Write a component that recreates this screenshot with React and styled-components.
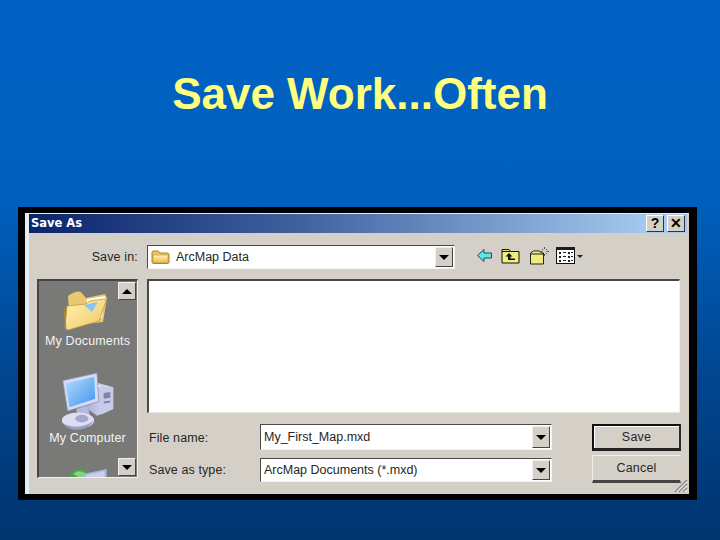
import React from "react";
import styled, { createGlobalStyle } from "styled-components";

const Global = createGlobalStyle`
  html, body { margin: 0; padding: 0; height: 540px; overflow: hidden; }
  body { background: #0060c0; }
`;

const Slide = styled.div`
  width: 720px;
  height: 540px;
  overflow: hidden;
  background: linear-gradient(180deg, #0062c4 0%, #0060bf 36%, #00468f 70%, #00346f 100%);
`;

const Title = styled.h1`
  margin: 0;
  height: 207px;
  padding-top: 69px;
  box-sizing: border-box;
  text-align: center;
  font: bold 44px/50px "Liberation Sans", Arial, sans-serif;
  color: #ffff80;
`;

const Frame = styled.div`
  position: relative;
  margin-left: 18px;
  width: 679px;
  height: 293px;
  box-sizing: border-box;
  border: solid #000;
  border-width: 6px 8px 6px 7px;
  background: #d4d0c8;
  font: 12.5px/16px "Liberation Sans", Arial, sans-serif;
  color: #262626;
`;

const Inner = styled.div`
  height: 100%;
  box-sizing: border-box;
  border-top: 1px solid #e8e6e0;
  border-left: 4px solid #e4eef4;
  padding-right: 2px;
`;

const TitleBar = styled.div`
  height: 19px;
  display: flex;
  align-items: center;
  justify-content: space-between;
  padding: 0 2px;
  background: linear-gradient(90deg, #0a246a 0%, #3f5f9d 40%, #a6caf0 95%);
`;

const Caption = styled.span`
  font: bold 11.5px/19px "DejaVu Sans", Verdana, sans-serif;
  color: #fff;
`;

const WinButtons = styled.div`
  display: flex;
  gap: 3px;
`;

const WinButton = styled.div`
  width: 18px;
  height: 17px;
  box-sizing: border-box;
  background: #d4d0c8;
  border: 1px solid;
  border-color: #fff #333 #333 #fff;
  font: bold 14px/15px "Liberation Sans", Arial, sans-serif;
  text-align: center;
  color: #000;
`;

const Content = styled.div`
  padding: 12px 6px 0 8px;
`;

const Toolbar = styled.div`
  display: flex;
  align-items: center;
  height: 24px;
  margin-bottom: 10px;
`;

const SaveInLabel = styled.label`
  width: 101px;
  margin-right: 9px;
  text-align: right;
  letter-spacing: 0.15px;
`;

const Combo = styled.div`
  display: flex;
  align-items: center;
  box-sizing: border-box;
  width: ${(p) => p.$w}px;
  height: ${(p) => p.$h}px;
  background: #fff;
  border: 1px solid;
  border-color: #4a4a48 #f4f3ef #f4f3ef #4a4a48;
  padding-right: 1px;
  padding-left: 3px;
`;

const ComboText = styled.span`
  flex: 1;
  white-space: nowrap;
`;

const Arrow = styled.div`
  flex: none;
  width: 18px;
  height: ${(p) => p.$h}px;
  box-sizing: border-box;
  display: flex;
  align-items: center;
  justify-content: center;
  background: #d4d0c8;
  border: 1px solid;
  border-color: #f0efeb #444 #444 #f0efeb;
`;

const Tri = styled.div`
  width: 0;
  height: 0;
  border-left: 5px solid transparent;
  border-right: 5px solid transparent;
  ${(p) => (p.$up ? "border-bottom: 5px solid #000;" : "border-top: 5px solid #000;")}
`;

const Tools = styled.div`
  display: flex;
  align-items: center;
  margin-left: 22px;
  margin-top: -3px;
  gap: 9px;
`;

const Main = styled.div`
  display: grid;
  grid-template-columns: 101px 534px;
  column-gap: 9px;
`;

const Places = styled.div`
  position: relative;
  height: 199px;
  box-sizing: border-box;
  overflow: hidden;
  background: #797977;
  border: 1px solid;
  border-width: 2px 1px 1px 2px;
  border-color: #454545 #f2f1ec #f2f1ec #454545;
`;

const Place = styled.div`
  display: flex;
  flex-direction: column;
  align-items: center;
  width: 97px;
  height: ${(p) => p.$h}px;
  padding-top: ${(p) => p.$pt}px;
  box-sizing: border-box;
  color: #f4f4f4;
  letter-spacing: 0.15px;
  white-space: nowrap;
`;

const ScrollBtn = styled.div`
  position: absolute;
  left: 79px;
  ${(p) => (p.$up ? "top: 1px;" : "bottom: 1px;")}
  width: 18px;
  height: 18px;
  box-sizing: border-box;
  display: flex;
  align-items: center;
  justify-content: center;
  background: #d4d0c8;
  border: 1px solid;
  border-color: #f0efeb #444 #444 #f0efeb;
`;

const Right = styled.div`
  display: flex;
  flex-direction: column;
`;

const FileList = styled.div`
  height: 134px;
  width: 533px;
  box-sizing: border-box;
  background: #fff;
  border: 1px solid;
  border-width: 2px 1px 1px 2px;
  border-color: #484848 #f2f1ec #e8e7e1 #484848;
`;

const Form = styled.div`
  display: flex;
  margin-top: 11px;
`;

const Fields = styled.div`
  display: flex;
  flex-direction: column;
  gap: 8px;
  width: 445px;
`;

const Field = styled.div`
  display: flex;
  align-items: center;
  height: ${(p) => p.$h}px;
`;

const FieldLabel = styled.label`
  width: 111px;
  padding-left: 2px;
  padding-top: ${(p) => p.$pt || 0}px;
  letter-spacing: 0.1px;
`;

const Buttons = styled.div`
  display: flex;
  flex-direction: column;
  gap: 4px;
`;

const Btn = styled.button`
  width: 89px;
  height: ${(p) => p.$h}px;
  margin: 0;
  padding: 0 0 1px;
  background: #d4d0c8;
  font: 12.5px/16px "Liberation Sans", Arial, sans-serif;
  letter-spacing: 0.2px;
  color: #262626;
  border-style: solid;
  border-width: ${(p) => (p.$def ? "2px 2px 3px 2px" : "1px 1px 3px 1px")};
  border-color: ${(p) => (p.$def ? "#111 #2a2a2a #222 #111" : "#f0efeb #d4d0c8 #444 #f0efeb")};
  box-shadow: ${(p) => (p.$def ? "inset 1px 1px 0 #fff" : "none")};
`;

const Grip = styled.svg`
  position: absolute;
  right: 1px;
  bottom: 1px;
`;

const FolderSmall = () => (
  <svg width="19" height="16" viewBox="0 0 19 16" style={{ marginRight: 6, flex: "none" }}>
    <defs>
      <linearGradient id="fs" x1="0" y1="0" x2="0" y2="1">
        <stop offset="0" stopColor="#fff4b8" />
        <stop offset="1" stopColor="#e8b84e" />
      </linearGradient>
    </defs>
    <path d="M1 3.5Q1 2 2.5 2H7L9 4H16.5Q18 4 18 5.5V13Q18 14.5 16.5 14.5H3Q1 14.5 1 13Z" fill="#e8c468" stroke="#a88420" />
    <path d="M2 6H17V12.5Q17 14 15.5 14H3.5Q2 14 2 12.5Z" fill="url(#fs)" stroke="#b8942c" strokeWidth=".6" />
  </svg>
);

const BigFolder = () => (
  <svg width="48" height="44" viewBox="0 -1 48 44" style={{ marginRight: 4 }}>
    <defs>
      <linearGradient id="bf" x1="0" y1="0" x2="1" y2="1">
        <stop offset="0" stopColor="#fff2b0" />
        <stop offset="1" stopColor="#efc868" />
      </linearGradient>
    </defs>
    <path d="M6 6Q14 0 19 2L24 8L43 4L45 8L41 32L8 36Z" fill="#e8c870" />
    <path d="M25 9L43 6L40 28L24 30Z" fill="#fdfcf2" />
    <path d="M5 16L24 14L28 11L42 9L44 11L37 31L6 40Q3 40 3 37Z" fill="url(#bf)" stroke="#c09a34" strokeWidth=".8" />
    <path d="M22 15L36 12L30 22Z" fill="#8cc4f0" />
    <path d="M2 17L4 40" stroke="#b08a2a" strokeWidth="1" />
  </svg>
);

const BigComputer = () => (
  <svg width="60" height="57" viewBox="3 0 55 60">
    <defs>
      <linearGradient id="sc" x1="0" y1="0" x2="1" y2="1">
        <stop offset="0" stopColor="#b8dcfc" />
        <stop offset="1" stopColor="#3f94f0" />
      </linearGradient>
      <linearGradient id="tw" x1="0" y1="0" x2="1" y2="0">
        <stop offset="0" stopColor="#aeb2dc" />
        <stop offset="1" stopColor="#e4e6f6" />
      </linearGradient>
    </defs>
    <path d="M36 9L57 15V38L40 45L30 38Z" fill="url(#tw)" />
    <path d="M44 14L57 15V38L44 44Z" fill="#c8cbe8" />
    <path d="M47 21L54 20V26L47 27Z" fill="#8084a8" />
    <path d="M47 30L54 29V31L47 32Z" fill="#8084a8" />
    <path d="M34 9L45 14L34 18Z" fill="#eef0fa" />
    <path d="M4 8L40 0L42 30L9 40Z" fill="#d4dcf4" stroke="#8a90b8" strokeWidth=".8" />
    <path d="M7 11L37 4L38 27L11 36Z" fill="url(#sc)" />
    <path d="M18 38L30 34L34 50L22 52Z" fill="#b4b8da" />
    <ellipse cx="20" cy="50" rx="17" ry="8.5" fill="#dcdef2" />
    <ellipse cx="24" cy="48" rx="7" ry="4" fill="#a4a8cc" />
    <path d="M3 52Q20 62 37 50Q30 60 18 60Q8 59 3 52Z" fill="#9a9ec4" />
  </svg>
);

const Globe = () => (
  <svg width="60" height="30" viewBox="0 0 60 30">
    <circle cx="18" cy="20" r="17" fill="#46a648" />
    <path d="M8 10Q18 2 30 12L22 20Z" fill="#88d080" />
    <path d="M24 10L58 3L58 30H24Z" fill="#a8b4de" />
    <path d="M27 12L55 6L55 30H27Z" fill="#c8d0ec" />
  </svg>
);

const BackIcon = () => (
  <svg width="15" height="13" viewBox="0 0 15 13">
    <path d="M7 .5L.5 6.5L7 12.5V9H14.5V4H7Z" fill="#5ce8e4" stroke="#1a4a54" strokeWidth="1" />
  </svg>
);

const UpIcon = () => (
  <svg width="19" height="16" viewBox="0 0 19 16">
    <path d="M1 3V1.5H8L9.5 3.5H18V15H1Z" fill="#f0ec80" stroke="#111" strokeWidth="1" />
    <path d="M1 3.5H9" stroke="#111" />
    <path d="M8 5L4.5 8.5H7V12H14V10.5H9.5V8.5H11.5Z" fill="#111" />
  </svg>
);

const NewFolderIcon = () => (
  <svg width="21" height="19" viewBox="0 0 20 19">
    <path d="M1 18V7L4 5H10L12 7H14V18Z" fill="#f0ec80" stroke="#222" strokeWidth="1" />
    <path d="M1 8H14" stroke="#222" />
    <path d="M15 1V3M15 8V10M11 5.5H13M17 5.5H19.5M12.5 3L13.5 4M17.5 3L16.5 4M12.5 8L13.5 7M17.5 8L16.5 7" stroke="#444" strokeWidth=".9" />
  </svg>
);

const ViewsIcon = () => (
  <svg width="27" height="17" viewBox="0 0 27 17" style={{ marginLeft: -3 }}>
    <rect x=".5" y=".5" width="18" height="16" fill="#fff" stroke="#111" />
    <rect x="0" y="0" width="19" height="3" fill="#1a1a20" />
    <path d="M3 5h2v2H3zM7 5h3v1H7zM12 5h2v2h-2zM15 5h2v1h-2zM3 9h2v2H3zM7 9h3v1H7zM12 9h2v2h-2zM15 9h2v1h-2zM3 13h2v2H3zM7 13h3v1H7zM12 13h2v2h-2zM15 13h2v1h-2z" fill="#222" />
    <path d="M21 8h6l-3 3z" fill="#222" />
  </svg>
);

export default function App() {
  return (
    <Slide>
      <Global />
      <Title>Save Work...Often</Title>
      <Frame>
        <Inner>
          <TitleBar>
            <Caption>Save As</Caption>
            <WinButtons>
              <WinButton>?</WinButton>
              <WinButton>✕</WinButton>
            </WinButtons>
          </TitleBar>
          <Content>
            <Toolbar>
              <SaveInLabel>Save in:</SaveInLabel>
              <Combo $w={308} $h={24}>
                <FolderSmall />
                <ComboText>ArcMap Data</ComboText>
                <Arrow $h={20}><Tri /></Arrow>
              </Combo>
              <Tools>
                <BackIcon />
                <UpIcon />
                <NewFolderIcon />
                <ViewsIcon />
              </Tools>
            </Toolbar>
            <Main>
              <Places>
                <Place $h={92} $pt={8}>
                  <BigFolder />
                  <span>My Documents</span>
                </Place>
                <Place $h={94} $pt={0}>
                  <BigComputer />
                  <span>My Computer</span>
                </Place>
                <Place $h={20} $pt={0}>
                  <Globe />
                </Place>
                <ScrollBtn $up><Tri $up /></ScrollBtn>
                <ScrollBtn><Tri /></ScrollBtn>
              </Places>
              <Right>
                <FileList />
                <Form>
                  <Fields>
                    <Field $h={26}>
                      <FieldLabel $pt={2}>File name:</FieldLabel>
                      <Combo $w={292} $h={26}>
                        <ComboText>My_First_Map.mxd</ComboText>
                        <Arrow $h={22}><Tri /></Arrow>
                      </Combo>
                    </Field>
                    <Field $h={24}>
                      <FieldLabel>Save as type:</FieldLabel>
                      <Combo $w={292} $h={24}>
                        <ComboText>ArcMap Documents (*.mxd)</ComboText>
                        <Arrow $h={20}><Tri /></Arrow>
                      </Combo>
                    </Field>
                  </Fields>
                  <Buttons>
                    <Btn $def $h={27}>Save</Btn>
                    <Btn $h={28}>Cancel</Btn>
                  </Buttons>
                </Form>
              </Right>
            </Main>
          </Content>
        </Inner>
        <Grip width="14" height="14" viewBox="0 0 14 14">
          <path d="M1 13L13 1M5 13L13 5M9 13L13 9" stroke="#808080" strokeWidth="1.2" />
          <path d="M2.5 13L13 2.5M6.5 13L13 6.5M10.5 13L13 10.5" stroke="#fff" strokeWidth=".8" />
        </Grip>
      </Frame>
    </Slide>
  );
}
